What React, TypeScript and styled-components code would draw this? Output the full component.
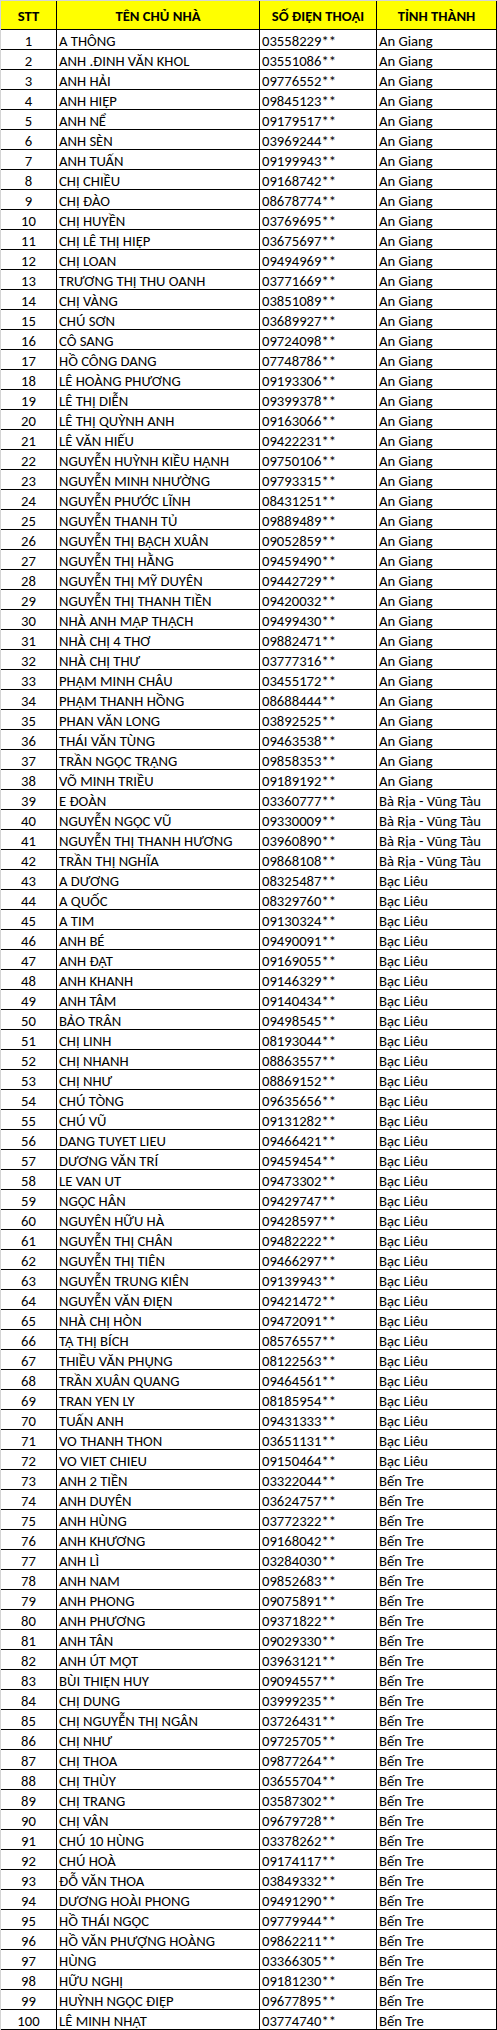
import React from "react";
import styled, { createGlobalStyle } from "styled-components";

const GlobalStyle = createGlobalStyle`
  html, body { margin: 0; padding: 0; background: #ffffff; }
  * { box-sizing: border-box; }
`;

type Row = [string, string, string];

const AG = "An Giang";
const BR = "Bà Rịa - Vũng Tàu";
const BL = "Bạc Liêu";
const BT = "Bến Tre";

const rows: Row[] = [
  ["A THÔNG", "03558229**", AG],
  ["ANH .ĐINH VĂN KHOL", "03551086**", AG],
  ["ANH HẢI", "09776552**", AG],
  ["ANH HIỆP", "09845123**", AG],
  ["ANH NỂ", "09179517**", AG],
  ["ANH SÈN", "03969244**", AG],
  ["ANH TUẤN", "09199943**", AG],
  ["CHỊ CHIỀU", "09168742**", AG],
  ["CHỊ ĐÀO", "08678774**", AG],
  ["CHỊ HUYỀN", "03769695**", AG],
  ["CHỊ LÊ THỊ HIỆP", "03675697**", AG],
  ["CHỊ LOAN", "09494969**", AG],
  ["TRƯƠNG THỊ THU OANH", "03771669**", AG],
  ["CHỊ VÀNG", "03851089**", AG],
  ["CHÚ SƠN", "03689927**", AG],
  ["CÔ SANG", "09724098**", AG],
  ["HỒ CÔNG DANG", "07748786**", AG],
  ["LÊ HOÀNG PHƯƠNG", "09193306**", AG],
  ["LÊ THỊ DIỄN", "09399378**", AG],
  ["LÊ THỊ QUỲNH ANH", "09163066**", AG],
  ["LÊ VĂN HIẾU", "09422231**", AG],
  ["NGUYỄN HUỲNH KIỀU HẠNH", "09750106**", AG],
  ["NGUYỄN MINH NHƯỜNG", "09793315**", AG],
  ["NGUYỄN PHƯỚC LĨNH", "08431251**", AG],
  ["NGUYỄN THANH TỦ", "09889489**", AG],
  ["NGUYỄN THỊ BẠCH XUÂN", "09052859**", AG],
  ["NGUYỄN THỊ HẰNG", "09459490**", AG],
  ["NGUYỄN THỊ MỸ DUYÊN", "09442729**", AG],
  ["NGUYỄN THỊ THANH TIỀN", "09420032**", AG],
  ["NHÀ ANH MẬP THẠCH", "09499430**", AG],
  ["NHÀ CHỊ 4 THƠ", "09882471**", AG],
  ["NHÀ CHỊ THƯ", "03777316**", AG],
  ["PHẠM MINH CHÂU", "03455172**", AG],
  ["PHẠM THANH HỒNG", "08688444**", AG],
  ["PHAN VĂN LONG", "03892525**", AG],
  ["THÁI VĂN TÙNG", "09463538**", AG],
  ["TRẦN NGỌC TRẠNG", "09858353**", AG],
  ["VÕ MINH TRIỀU", "09189192**", AG],
  ["E ĐOÀN", "03360777**", BR],
  ["NGUYỄN NGỌC VŨ", "09330009**", BR],
  ["NGUYỄN THỊ THANH HƯƠNG", "03960890**", BR],
  ["TRẦN THỊ NGHĨA", "09868108**", BR],
  ["A DƯƠNG", "08325487**", BL],
  ["A QUỐC", "08329760**", BL],
  ["A TIM", "09130324**", BL],
  ["ANH BÉ", "09490091**", BL],
  ["ANH ĐẠT", "09169055**", BL],
  ["ANH KHANH", "09146329**", BL],
  ["ANH TÂM", "09140434**", BL],
  ["BẢO TRÂN", "09498545**", BL],
  ["CHỊ LINH", "08193044**", BL],
  ["CHỊ NHANH", "08863557**", BL],
  ["CHỊ NHƯ", "08869152**", BL],
  ["CHÚ TÒNG", "09635656**", BL],
  ["CHÚ VŨ", "09131282**", BL],
  ["DANG TUYET LIEU", "09466421**", BL],
  ["DƯƠNG VĂN TRÍ", "09459454**", BL],
  ["LE VAN UT", "09473302**", BL],
  ["NGỌC HÂN", "09429747**", BL],
  ["NGUYÊN HỮU HÀ", "09428597**", BL],
  ["NGUYỄN THỊ CHÂN", "09482222**", BL],
  ["NGUYỄN THỊ TIÊN", "09466297**", BL],
  ["NGUYỄN TRUNG KIÊN", "09139943**", BL],
  ["NGUYỄN VĂN ĐIỆN", "09421472**", BL],
  ["NHÀ CHỊ HÒN", "09472091**", BL],
  ["TẠ THỊ BÍCH", "08576557**", BL],
  ["THIỀU VĂN PHỤNG", "08122563**", BL],
  ["TRẦN XUÂN QUANG", "09464561**", BL],
  ["TRAN YEN LY", "08185954**", BL],
  ["TUẤN ANH", "09431333**", BL],
  ["VO THANH THON", "03651131**", BL],
  ["VO VIET CHIEU", "09150464**", BL],
  ["ANH 2 TIỀN", "03322044**", BT],
  ["ANH DUYÊN", "03624757**", BT],
  ["ANH HÙNG", "03772322**", BT],
  ["ANH KHƯƠNG", "09168042**", BT],
  ["ANH LÌ", "03284030**", BT],
  ["ANH NAM", "09852683**", BT],
  ["ANH PHONG", "09075891**", BT],
  ["ANH PHƯƠNG", "09371822**", BT],
  ["ANH TÂN", "09029330**", BT],
  ["ANH ÚT MỘT", "03963121**", BT],
  ["BÙI THIỆN HUY", "09094557**", BT],
  ["CHỊ DUNG", "03999235**", BT],
  ["CHỊ NGUYỄN THỊ NGÂN", "03726431**", BT],
  ["CHỊ NHƯ", "09725705**", BT],
  ["CHỊ THOA", "09877264**", BT],
  ["CHỊ THÙY", "03655704**", BT],
  ["CHỊ TRANG", "03587302**", BT],
  ["CHỊ VÂN", "09679728**", BT],
  ["CHÚ 10 HÙNG", "03378262**", BT],
  ["CHÚ HOÀ", "09174117**", BT],
  ["ĐỖ VĂN THOA", "03849332**", BT],
  ["DƯƠNG HOÀI PHONG", "09491290**", BT],
  ["HỒ THÁI NGỌC", "09779944**", BT],
  ["HỒ VĂN PHƯỢNG HOÀNG", "09862211**", BT],
  ["HÙNG", "03366305**", BT],
  ["HỮU NGHỊ", "09181230**", BT],
  ["HUỲNH NGỌC ĐIỆP", "09677895**", BT],
  ["LÊ MINH NHẬT", "03774740**", BT],
];

const Sheet = styled.div`
  display: grid;
  grid-template-columns: 56px 203px 117px 120px;
  width: 497px;
  border-left: 1px solid #d4d4d4;
  border-top: 1px solid #d4d4d4;
  font-family: Carlito, Lato, "Liberation Sans", sans-serif;
  font-size: 14.67px;
  color: #000000;
`;

const HeaderCell = styled.div`
  height: 29px;
  background: #ffff00;
  border-right: 1px solid #000000;
  border-bottom: 1px solid #000000;
  padding-top: 2px;
  line-height: 26px;
  text-align: center;
  font-weight: 700;
  white-space: nowrap;
`;

const Cell = styled.div<{ $center?: boolean }>`
  height: 20px;
  border-right: 1px solid #000000;
  border-bottom: 1px solid #000000;
  padding: 2px 0 0 ${(p) => (p.$center ? "0" : "2px")};
  line-height: 19px;
  text-align: ${(p) => (p.$center ? "center" : "left")};
  white-space: nowrap;
`;

export default function App() {
  return (
    <>
      <GlobalStyle />
      <Sheet>
        <HeaderCell>STT</HeaderCell>
        <HeaderCell>TÊN CHỦ NHÀ</HeaderCell>
        <HeaderCell>SỐ ĐIỆN THOẠI</HeaderCell>
        <HeaderCell>TỈNH THÀNH</HeaderCell>
        {rows.map((r, i) => (
          <React.Fragment key={i}>
            <Cell $center>{i + 1}</Cell>
            <Cell>{r[0]}</Cell>
            <Cell>{r[1]}</Cell>
            <Cell>{r[2]}</Cell>
          </React.Fragment>
        ))}
      </Sheet>
    </>
  );
}
